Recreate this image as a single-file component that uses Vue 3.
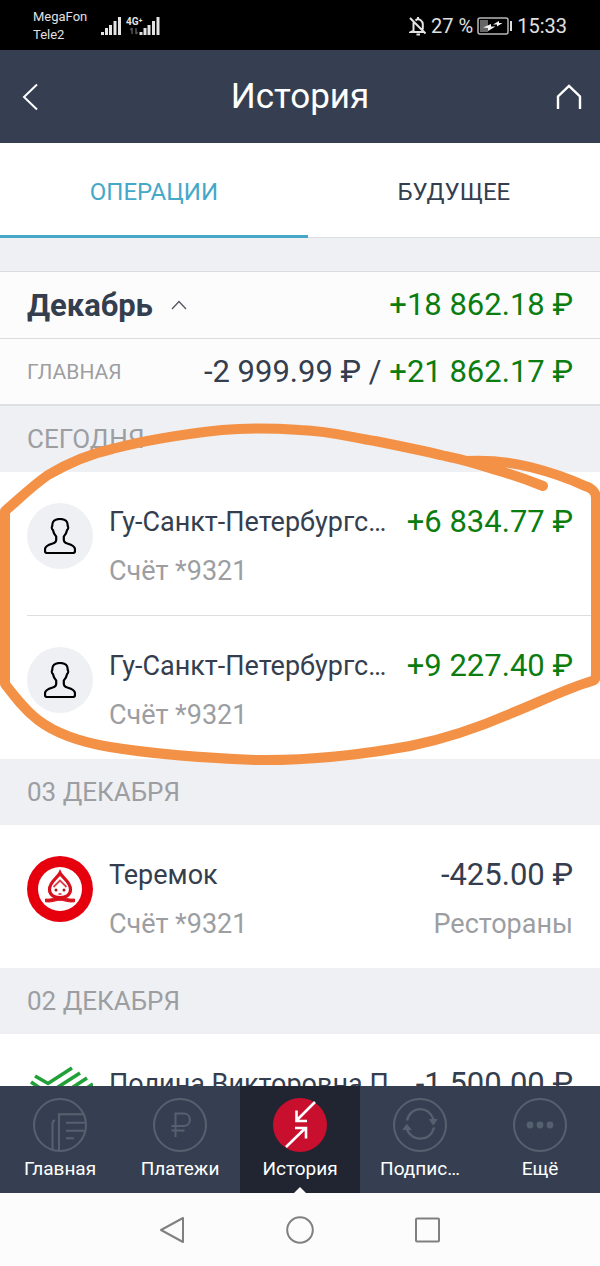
<script setup>
import { ref } from 'vue'

const activeTab = ref('ops')
const tabs = [
  { id: 'ops', label: 'ОПЕРАЦИИ' },
  { id: 'future', label: 'БУДУЩЕЕ' },
]

const days = [
  {
    title: 'СЕГОДНЯ',
    marked: true,
    items: [
      { icon: 'person', name: 'Гу-Санкт-Петербургс…', account: 'Счёт *9321', amount: '+6 834.77 ₽', income: true },
      { icon: 'person', name: 'Гу-Санкт-Петербургс…', account: 'Счёт *9321', amount: '+9 227.40 ₽', income: true },
    ],
  },
  {
    title: '03 ДЕКАБРЯ',
    items: [
      { icon: 'teremok', name: 'Теремок', account: 'Счёт *9321', amount: '-425.00 ₽', category: 'Рестораны' },
    ],
  },
  {
    title: '02 ДЕКАБРЯ',
    items: [
      { icon: 'sber', name: 'Полина Викторовна П…', account: 'Счёт *9321', amount: '-1 500.00 ₽' },
    ],
  },
]

const menu = [
  { id: 'home', label: 'Главная' },
  { id: 'pay', label: 'Платежи' },
  { id: 'history', label: 'История' },
  { id: 'subs', label: 'Подпис…' },
  { id: 'more', label: 'Ещё' },
]
const activeMenu = ref('history')
</script>

<template>
  <div class="screen">
    <div class="status">
      <div class="carriers">
        <span>MegaFon</span>
        <span>Tele2</span>
      </div>
      <svg class="signal" width="60" height="22" viewBox="0 0 60 22" aria-hidden="true">
        <g fill="#e4e4e4">
          <rect x="0" y="17" width="3" height="3" />
          <rect x="4" y="13" width="3" height="7" />
          <rect x="8" y="10" width="3" height="10" />
          <rect x="12.500" y="6" width="3" height="14" />
          <rect x="17" y="2" width="3" height="18" />
          <rect x="38.500" y="17" width="3" height="3" />
          <rect x="42.500" y="13" width="3" height="7" />
          <rect x="46.500" y="10" width="3" height="10" />
          <rect x="51" y="6" width="3" height="14" />
          <rect x="55.500" y="2" width="3" height="18" />
        </g>
        <text x="25" y="10" class="net">4G⁺</text>
        <path d="M31 13v6M29.500 15l1.500-2M35 13v6M35 19l1.500-2" stroke="#555" stroke-width="1.500" fill="none" />
      </svg>
      <div class="spacer"></div>
      <svg width="18" height="20" viewBox="0 0 18 20" fill="none" stroke="#e4e4e4" stroke-width="2" aria-hidden="true">
        <path d="M4.500 6.500v8l-2.500 1.500h12.500M6.500 4.500c.8-.8 1.600-1.200 2.500-1.200s4.800.7 4.800 5.200v5M9 1v2M1 2l15.500 15.500" />
        <path d="M7.500 18.500h3.500" />
      </svg>
      <span class="status-text">27 %</span>
      <svg class="battery" width="36" height="18" viewBox="0 0 36 18" aria-hidden="true">
        <rect x="1" y="1" width="30" height="16" rx="2" fill="none" stroke="#b8b8b8" stroke-width="1.500" />
        <rect x="3" y="3" width="8" height="12" fill="#666" />
        <rect x="33" y="4" width="2" height="10" fill="#ddd" />
        <path d="M6 10.500l8-3.500v2.500h4.500L11 14v-3zM16 7.500l6-3.500v2h3.500L20 9.500V7.500z" fill="#f2f2f2" />
      </svg>
      <span class="status-text">15:33</span>
    </div>

    <header class="header">
      <button class="icon-btn back" aria-label="Назад">
        <svg width="18" height="28" viewBox="0 0 18 28" fill="none" stroke="#fff" stroke-width="2"><path d="M15 1.500L2 14 15 26.500" /></svg>
      </button>
      <h1>История</h1>
      <button class="icon-btn home" aria-label="На главную">
        <svg width="26" height="26" viewBox="0 0 26 26" fill="none" stroke="#fff" stroke-width="2.400"><path d="M2 25V12.500L13 2l11 10.500V25" /></svg>
      </button>
    </header>

    <nav class="tabs">
      <button
        v-for="tab in tabs"
        :key="tab.id"
        class="tab"
        :class="{ active: activeTab === tab.id }"
        @click="activeTab = tab.id"
      >{{ tab.label }}</button>
    </nav>

    <main class="feed">
      <section class="month">
        <button class="month-row">
          <span class="month-name">Декабрь
            <svg width="16" height="10" viewBox="0 0 16 10" fill="none" stroke="#50565f" stroke-width="1.300"><path d="M1 9l7-7.500L15 9" /></svg>
          </span>
          <span class="amount income">+18 862.18 ₽</span>
        </button>
        <div class="month-row">
          <span class="month-account">ГЛАВНАЯ</span>
          <span class="amount">-2 999.99 ₽ / <span class="income">+21 862.17 ₽</span></span>
        </div>
      </section>

      <section v-for="day in days" :key="day.title" class="day">
        <h2>{{ day.title }}</h2>
        <ul>
          <li v-for="(item, i) in day.items" :key="i" class="op">
            <span class="avatar" :class="item.icon">
              <svg v-if="item.icon === 'person'" width="32" height="36" viewBox="0 0 32 36" fill="none" stroke="#000" stroke-width="2.200" stroke-linejoin="round" aria-hidden="true">
                <path d="M16 1c-5.500 0-8 2.500-7.700 7-.8 1-.5 3 .6 4 .6 3 1.800 5 3.300 6.500v3.500c0 2.200-1.500 3-4.200 3.800C3 27.200 1 28.500 1 31.500V33c0 1.200.6 2 2 2h26c1.400 0 2-.8 2-2v-1.500c0-3-2-4.300-7-5.700-2.700-.8-4.200-1.600-4.200-3.800v-3.500c1.500-1.500 2.700-3.500 3.300-6.500 1.100-1 1.400-3 .6-4C24 3.500 21.500 1 16 1z" />
              </svg>
              <svg v-else-if="item.icon === 'teremok'" width="66" height="66" viewBox="0 0 66 66" aria-hidden="true">
                <circle cx="33" cy="33" r="33" fill="#e6000e" />
                <circle cx="33" cy="33" r="22" fill="#fff" />
                <path d="M33 17c-2 4.500-10.500 8.500-10.500 16.500 0 4.500 3.500 8 10.500 8s10.500-3.500 10.500-8C43.500 25.500 35 21.500 33 17z" fill="#fff" stroke="#d8101c" stroke-width="3.200" />
                <path d="M26.500 31l6.500-6.500 6.500 6.500" fill="none" stroke="#e0404a" stroke-width="1.800" />
                <circle cx="29" cy="34" r="1.500" fill="#a01820" />
                <circle cx="37" cy="34" r="1.500" fill="#a01820" />
                <path d="M31.500 38h3" stroke="#d8101c" stroke-width="1.400" />
                <path d="M18.500 43c7 .8 10-2 14.500-2s7.500 2.800 14.500 2v2.800c-7 .7-10-1.500-14.500-1.500s-7.500 2.200-14.500 1.500z" fill="#d8101c" stroke="#d8101c" />
              </svg>
              <svg v-else width="66" height="66" viewBox="0 0 66 66" fill="none" stroke="#21a038" stroke-width="3.600" aria-hidden="true">
                <path d="M8 11l13 7.500L45 3M4 17l17 11.500L53 8M3 27l18 11.500L60 13M3 37l18 11.500L66 19" />
              </svg>
            </span>
            <span class="info">
              <span class="name">{{ item.name }}</span>
              <span class="note">{{ item.account }}</span>
            </span>
            <span class="sum">
              <span class="amount" :class="{ income: item.income }">{{ item.amount }}</span>
              <span v-if="item.category" class="note">{{ item.category }}</span>
            </span>
          </li>
        </ul>
        <svg v-if="day.marked" class="marker" viewBox="0 406 600 353" preserveAspectRatio="none" aria-hidden="true">
          <path d="M543 486C528 480 510 474 496 470C475 463 460 459 445 456C420 450 395 445 375 441C350 437 330 431 300 430C270 428 245 428 222 430C185 434 150 439 112 449C85 455 65 465 48 475C32 486 18 500 5 511V684C15 697 25 710 38 720C55 733 80 742 110 747C160 755 205 758 255 760C310 761 360 755 410 746C450 738 480 727 512 713C540 702 565 689 592 681C596 680 596 676 596 672V498C596 493 592 488 585 486C570 479 550 472 530 467C510 462 485 460 466 461L496 467" />
        </svg>
      </section>
    </main>

    <nav class="menu">
      <button
        v-for="entry in menu"
        :key="entry.id"
        class="menu-item"
        :class="{ active: activeMenu === entry.id }"
        @click="activeMenu = entry.id"
      >
        <svg width="54" height="54" viewBox="0 0 54 54" fill="none" stroke="#56616f" stroke-width="2" aria-hidden="true">
          <circle v-if="entry.id !== 'history'" cx="27" cy="27" r="26" />
          <template v-if="entry.id === 'home'">
            <path d="M19.500 51V26c0-2.500.8-3.500 2.500-3.500M26 52V16.300h25M33 24.700h19M33 32.700h18M33 40.300h8" />
          </template>
          <template v-else-if="entry.id === 'pay'">
            <path d="M22.500 39V15.500h8c8.500 0 8.500 12.500 0 12.500h-12M18.500 32.500h13" />
          </template>
          <template v-else-if="entry.id === 'history'">
            <circle cx="27" cy="27" r="27" fill="#c8102e" stroke="none" />
            <path d="M42 4L23.500 22.500M23.500 12.500v10.500H34M13 49l19.500-19M22 30h11v10.500" stroke="#fff" stroke-width="2.600" />
          </template>
          <template v-else-if="entry.id === 'subs'">
            <path d="M14 22.500c4-15 22-15 26.500-1M41 29.500c-3.500 14.500-22.500 14.500-27 2" stroke-width="2.400" />
            <path d="M36.500 21.500h7.500l-3.700 5.500zM10 31.500h8l-4.200-5z" fill="#56616f" stroke-width="1" />
          </template>
          <g v-else fill="#56616f" stroke="none">
            <circle cx="17" cy="27" r="3.400" />
            <circle cx="27" cy="27" r="3.400" />
            <circle cx="37" cy="27" r="3.400" />
          </g>
        </svg>
        <span>{{ entry.label }}</span>
      </button>
    </nav>

    <nav class="system">
      <button aria-label="Назад">
        <svg width="28" height="28" viewBox="0 0 28 28"><path d="M25 2v24L3 14z" /></svg>
      </button>
      <button aria-label="Домой">
        <svg width="28" height="28" viewBox="0 0 28 28"><circle cx="14" cy="14" r="12.800" /></svg>
      </button>
      <button aria-label="Недавние">
        <svg width="28" height="28" viewBox="0 0 28 28"><rect x="2" y="2.500" width="23" height="23" rx="1" /></svg>
      </button>
    </nav>
  </div>
</template>

<style>
body {
  margin: 0;
}
</style>

<style scoped>
.screen {
  display: flex;
  flex-direction: column;
  height: 100vh;
  overflow: hidden;
  background: #fff;
  color: #343e4e;
  font-family: Roboto, "Liberation Sans", sans-serif;
}
button {
  margin: 0;
  padding: 0;
  border: 0;
  background: none;
  color: inherit;
  font: inherit;
  cursor: pointer;
}
svg {
  flex: none;
}

.status {
  box-sizing: border-box;
  flex: none;
  display: flex;
  align-items: center;
  gap: 4px;
  height: 50px;
  padding: 2px 33px 0;
  background: #000;
  color: #e0e0e0;
}
.carriers {
  display: flex;
  flex-direction: column;
  font-size: 13px;
  line-height: 18px;
}
.signal {
  margin-left: 10px;
}
.net {
  fill: #e4e4e4;
  font-size: 10px;
  font-weight: 700;
}
.spacer {
  flex: 1;
}
.status-text {
  font-size: 20px;
  line-height: 24px;
}

.header {
  flex: none;
  display: flex;
  align-items: center;
  justify-content: space-between;
  height: 93px;
  background: #363f51;
  color: #fff;
}
.header h1 {
  margin: 0;
  font-size: 35px;
  font-weight: 400;
  line-height: 44px;
}
.icon-btn {
  display: flex;
  align-items: center;
  width: 60px;
  height: 60px;
}
.back {
  padding-left: 22px;
}
.home {
  justify-content: flex-end;
  padding-right: 18px;
}

.tabs {
  flex: none;
  display: flex;
  height: 95px;
}
.tab {
  flex: 1 1 auto;
  border-top: 3px solid transparent;
  border-bottom: 1px solid #dcdfe2;
  font-size: 24px;
}
.tab.active {
  border-top-width: 5px;
  border-bottom: 3px solid #46a8c8;
  color: #46a8c8;
}

.feed {
  flex: 1;
  min-height: 0;
  overflow: hidden;
}
.month {
  border-top: 33px solid #eff0f4;
}
.month-row {
  box-sizing: border-box;
  display: flex;
  align-items: center;
  justify-content: space-between;
  width: 100%;
  height: 67px;
  padding: 0 27px;
  border-top: 1px solid #d9dbdf;
  background: #fcfcfc;
}
.month-row:last-child {
  height: 68px;
  border-bottom: 2px solid #dfe1e4;
}
.month-name {
  display: flex;
  align-items: center;
  gap: 18px;
  font-size: 31px;
  font-weight: 700;
}
.month-account {
  color: #9c9ea2;
  font-size: 21px;
}
.amount {
  font-size: 31px;
  line-height: 38px;
  white-space: nowrap;
}
.income {
  color: #0b7d10;
}

.day {
  position: relative;
}
.day h2 {
  margin: 0;
  padding: 0 27px;
  background: #eff0f4;
  color: #9c9ea2;
  font-size: 26px;
  font-weight: 400;
  line-height: 66px;
}
.day ul {
  margin: 0;
  padding: 0 0 0 27px;
  list-style: none;
}
.op {
  display: flex;
  gap: 16px;
  padding: 31px 27px 25px 0;
}
.op + .op {
  border-top: 1px solid #dcdee0;
}
.avatar {
  flex: none;
  display: flex;
  align-items: center;
  justify-content: center;
  width: 66px;
  height: 66px;
  border-radius: 50%;
}
.avatar.person {
  background: #eff0f4;
}
.info,
.sum {
  display: flex;
  flex-direction: column;
  gap: 11px;
}
.info {
  flex: 1;
  min-width: 0;
}
.sum {
  align-items: flex-end;
}
.name,
.note {
  font-size: 27px;
  line-height: 38px;
  white-space: nowrap;
}
.note {
  color: #9c9ea2;
}
.marker {
  position: absolute;
  inset: 0;
  width: 100%;
  height: 100%;
  overflow: visible;
  pointer-events: none;
  z-index: 1;
}
.marker path {
  fill: none;
  stroke: #f39247;
  stroke-width: 10;
  stroke-linecap: round;
  stroke-linejoin: round;
}

.menu {
  position: relative;
  z-index: 2;
  flex: none;
  display: flex;
  background: #363f51;
  color: #fff;
}
.menu-item {
  position: relative;
  flex: 1;
  display: flex;
  flex-direction: column;
  align-items: center;
  gap: 5px;
  padding: 12px 0 12px;
  font-size: 19px;
  line-height: 24px;
}
.menu-item.active {
  background: #202531;
}
.menu-item.active::after {
  content: "";
  position: absolute;
  bottom: 0;
  left: 50%;
  margin-left: -6px;
  border: 6px solid transparent;
  border-top: 0;
  border-bottom-color: #fcfcfc;
}

.system {
  flex: none;
  display: flex;
  align-items: center;
  justify-content: center;
  gap: 100px;
  height: 73px;
  background: #fcfcfc;
}
.system button {
  display: flex;
}
.system svg {
  fill: none;
  stroke: #808080;
  stroke-width: 2;
  stroke-linejoin: round;
}
</style>
